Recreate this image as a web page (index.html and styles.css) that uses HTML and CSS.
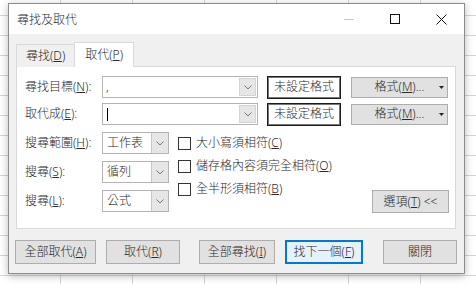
FILE: index.html
```html
<!DOCTYPE html>
<html lang="zh-Hant">
<head>
<meta charset="utf-8">
<link rel="stylesheet" href="styles.css">
</head>
<body>
<div class="desk">
  <div class="dialog">
    <div class="titlebar">
      <span class="title">尋找及取代</span>
      <div class="winbtns">
        <span class="winbtn"><svg width="10" height="10" viewBox="0 0 10 10"><line x1="0" y1="5.5" x2="10" y2="5.5" stroke="#c8c8c8" stroke-width="1"/></svg></span>
        <span class="winbtn"><svg width="10" height="10" viewBox="0 0 10 10"><rect x="0.5" y="0.5" width="9" height="9" fill="none" stroke="#111" stroke-width="1"/></svg></span>
        <span class="winbtn"><svg width="11" height="11" viewBox="0 0 11 11"><path d="M0.5 0.5L10.5 10.5M10.5 0.5L0.5 10.5" stroke="#111" stroke-width="1"/></svg></span>
      </div>
    </div>
    <div class="body">
      <div class="tabs">
        <span class="tab">尋找(<u>D</u>)</span>
        <span class="tab active">取代(<u>P</u>)</span>
      </div>
      <div class="panel">
        <div class="row">
          <span class="label">尋找目標(<u>N</u>):</span>
          <div class="combo"><span class="field">,</span><span class="drop"><svg width="8" height="5" viewBox="0 0 8 5"><polyline points="0.5,0.5 4,4 7.5,0.5" fill="none" stroke="#777" stroke-width="1"/></svg></span></div>
          <span class="fmtbox">未設定格式</span>
          <span class="btn fmtbtn"><span class="fmt-text">格式(<u>M</u>)...</span><svg class="caret" width="5" height="3" viewBox="0 0 5 3"><polygon points="0,0 5,0 2.5,3" fill="#222"/></svg></span>
        </div>
        <div class="row">
          <span class="label">取代成(<u>E</u>):</span>
          <div class="combo"><span class="field"><span class="cursor"></span></span><span class="drop"><svg width="8" height="5" viewBox="0 0 8 5"><polyline points="0.5,0.5 4,4 7.5,0.5" fill="none" stroke="#777" stroke-width="1"/></svg></span></div>
          <span class="fmtbox">未設定格式</span>
          <span class="btn fmtbtn"><span class="fmt-text">格式(<u>M</u>)...</span><svg class="caret" width="5" height="3" viewBox="0 0 5 3"><polygon points="0,0 5,0 2.5,3" fill="#222"/></svg></span>
        </div>
        <div class="lower">
          <div class="selects">
            <span class="label">搜尋範圍(<u>H</u>):</span>
            <div class="select"><span class="field">工作表</span><span class="sdrop"><svg width="8" height="5" viewBox="0 0 8 5"><polyline points="0.5,0.5 4,4 7.5,0.5" fill="none" stroke="#777" stroke-width="1"/></svg></span></div>
            <span class="label">搜尋(<u>S</u>):</span>
            <div class="select"><span class="field">循列</span><span class="sdrop"><svg width="8" height="5" viewBox="0 0 8 5"><polyline points="0.5,0.5 4,4 7.5,0.5" fill="none" stroke="#777" stroke-width="1"/></svg></span></div>
            <span class="label">搜尋(<u>L</u>):</span>
            <div class="select"><span class="field">公式</span><span class="sdrop"><svg width="8" height="5" viewBox="0 0 8 5"><polyline points="0.5,0.5 4,4 7.5,0.5" fill="none" stroke="#777" stroke-width="1"/></svg></span></div>
          </div>
          <div class="checks">
            <label class="check"><span class="box"></span>大小寫須相符(<u>C</u>)</label>
            <label class="check"><span class="box"></span>儲存格內容須完全相符(<u>O</u>)</label>
            <label class="check"><span class="box"></span>全半形須相符(<u>B</u>)</label>
          </div>
          <span class="btn options">選項(<u>T</u>) &lt;&lt;</span>
        </div>
      </div>
      <div class="footer">
        <div class="group">
          <span class="btn b-all-rep">全部取代(<u>A</u>)</span>
          <span class="btn b-rep">取代(<u>R</u>)</span>
        </div>
        <div class="group mid">
          <span class="btn b-all-find">全部尋找(<u>I</u>)</span>
          <span class="btn b-next">找下一個(<u>F</u>)</span>
        </div>
        <span class="btn b-close">關閉</span>
      </div>
    </div>
  </div>
</div>
</body>
</html>
```

FILE: styles.css
```css
* { box-sizing: border-box; }
html, body { margin: 0; padding: 0; }
body {
  width: 476px;
  height: 284px;
  overflow: hidden;
  font-family: "Noto Sans", "Noto Sans CJK TC", sans-serif;
  font-size: 12px;
  font-weight: 300;
  color: #2a2a2a;
  background-color: #fff;
  background-image:
    linear-gradient(to right, #d6d6d6 1px, transparent 1px),
    linear-gradient(to bottom, #d6d6d6 1px, transparent 1px);
  background-size: 72px 100%, 100% 20px;
  background-position: 60px 0, 0 15px;
}
u { text-decoration: underline; text-underline-offset: 1px; }
.desk { padding: 3px 0 0 8px; }
.dialog {
  width: 457px;
  height: 271px;
  border: 1px solid #8c8c8c;
  background: #f0f0f0;
  box-shadow: 0 2px 8px rgba(0,0,0,0.28);
  display: flex;
  flex-direction: column;
}
.titlebar {
  height: 30px;
  background: #fff;
  display: flex;
  align-items: center;
  padding-left: 8px;
}
.title { font-size: 12px; line-height: 16px; margin-top: 1px; }
.winbtns { margin-left: auto; display: flex; height: 100%; }
.winbtn {
  width: 46px;
  height: 100%;
  display: flex;
  align-items: center;
  justify-content: center;
}
.winbtn svg { display: block; }
.body { padding: 8px 0 0 7px; }
.tabs { display: flex; align-items: flex-end; height: 25px; position: relative; z-index: 1; }
.tab {
  height: 23px;
  padding: 0 9px;
  display: flex;
  align-items: center;
  border: 1px solid #d9d9d9;
  border-bottom: none;
  background: #f0f0f0;
  line-height: 14px;
}
.tab.active {
  height: 25px;
  background: #fff;
  padding: 0 10px;
  margin-left: -1px;
}
.panel {
  width: 440px;
  height: 163px;
  margin-top: -1px;
  background: #fff;
  border: 1px solid #d9d9d9;
  padding: 9px 6px 0 8px;
}
.row { display: flex; align-items: center; height: 22px; margin-bottom: 5px; }
.label { width: 77px; line-height: 14px; white-space: nowrap; }
.combo {
  width: 156px;
  height: 22px;
  border: 1px solid #b4b4b4;
  display: flex;
  background: #fff;
}
.field { flex: 1; display: flex; align-items: center; padding-left: 3px; line-height: 14px; }
.cursor { display: block; width: 1px; height: 13px; background: #000; margin-left: 1px; }
.drop {
  width: 17px;
  margin: 1px;
  background: #e6e6e6;
  border: 1px solid #d4d4d4;
  display: flex;
  align-items: center;
  justify-content: center;
}
.drop svg, .sdrop svg { display: block; }
.fmtbox {
  width: 74px;
  height: 23px;
  margin-left: 9px;
  border: 1px solid #1a1a1a;
  box-shadow: inset 0 0 0 1px #777;
  display: flex;
  align-items: center;
  justify-content: center;
  line-height: 14px;
  background: #fff;
}
.btn {
  background: #e1e1e1;
  border: 1px solid #adadad;
  display: flex;
  align-items: center;
  justify-content: center;
  line-height: 14px;
  white-space: nowrap;
}
.fmtbtn {
  width: 97px;
  height: 21px;
  margin-left: 10px;
  display: grid;
  grid-template-columns: 1fr auto 1fr;
  align-items: center;
}
.fmt-text { grid-column: 2; }
.caret { grid-column: 3; justify-self: end; margin-right: 3px; display: block; }
.lower { display: flex; margin-top: 7px; height: 84px; }
.selects {
  display: grid;
  grid-template-columns: 77px 67px;
  grid-auto-rows: 22px;
  row-gap: 7px;
  align-items: center;
}
.select {
  width: 67px;
  height: 22px;
  border: 1px solid #b4b4b4;
  display: flex;
  background: #fff;
}
.select .field { padding-left: 4px; }
.sdrop {
  width: 17px;
  background: #e6e6e6;
  border-left: 1px solid #c8c8c8;
  display: flex;
  align-items: center;
  justify-content: center;
}
.checks { display: flex; flex-direction: column; margin-left: 9px; gap: 1px; }
.check { display: flex; align-items: center; height: 22px; line-height: 14px; white-space: nowrap; }
.box {
  width: 13px;
  height: 13px;
  border: 1px solid #333;
  background: #fff;
  margin-right: 5px;
}
.options {
  width: 77px;
  height: 23px;
  margin-left: auto;
  align-self: flex-end;
  margin-bottom: 3px;
}
.footer { display: flex; margin-top: 11px; height: 24px; margin-left: -1px; }
.footer .btn { height: 24px; }
.group { display: flex; gap: 10px; }
.group.mid { margin-left: 19px; }
.b-all-rep { width: 81px; }
.b-rep { width: 74px; }
.b-all-find { width: 76px; }
.b-next { width: 78px; border-color: #0078d7; box-shadow: inset 0 0 0 1px #0078d7; background: #e5f1fb; }
.b-close { width: 74px; margin-left: 20px; }
```
